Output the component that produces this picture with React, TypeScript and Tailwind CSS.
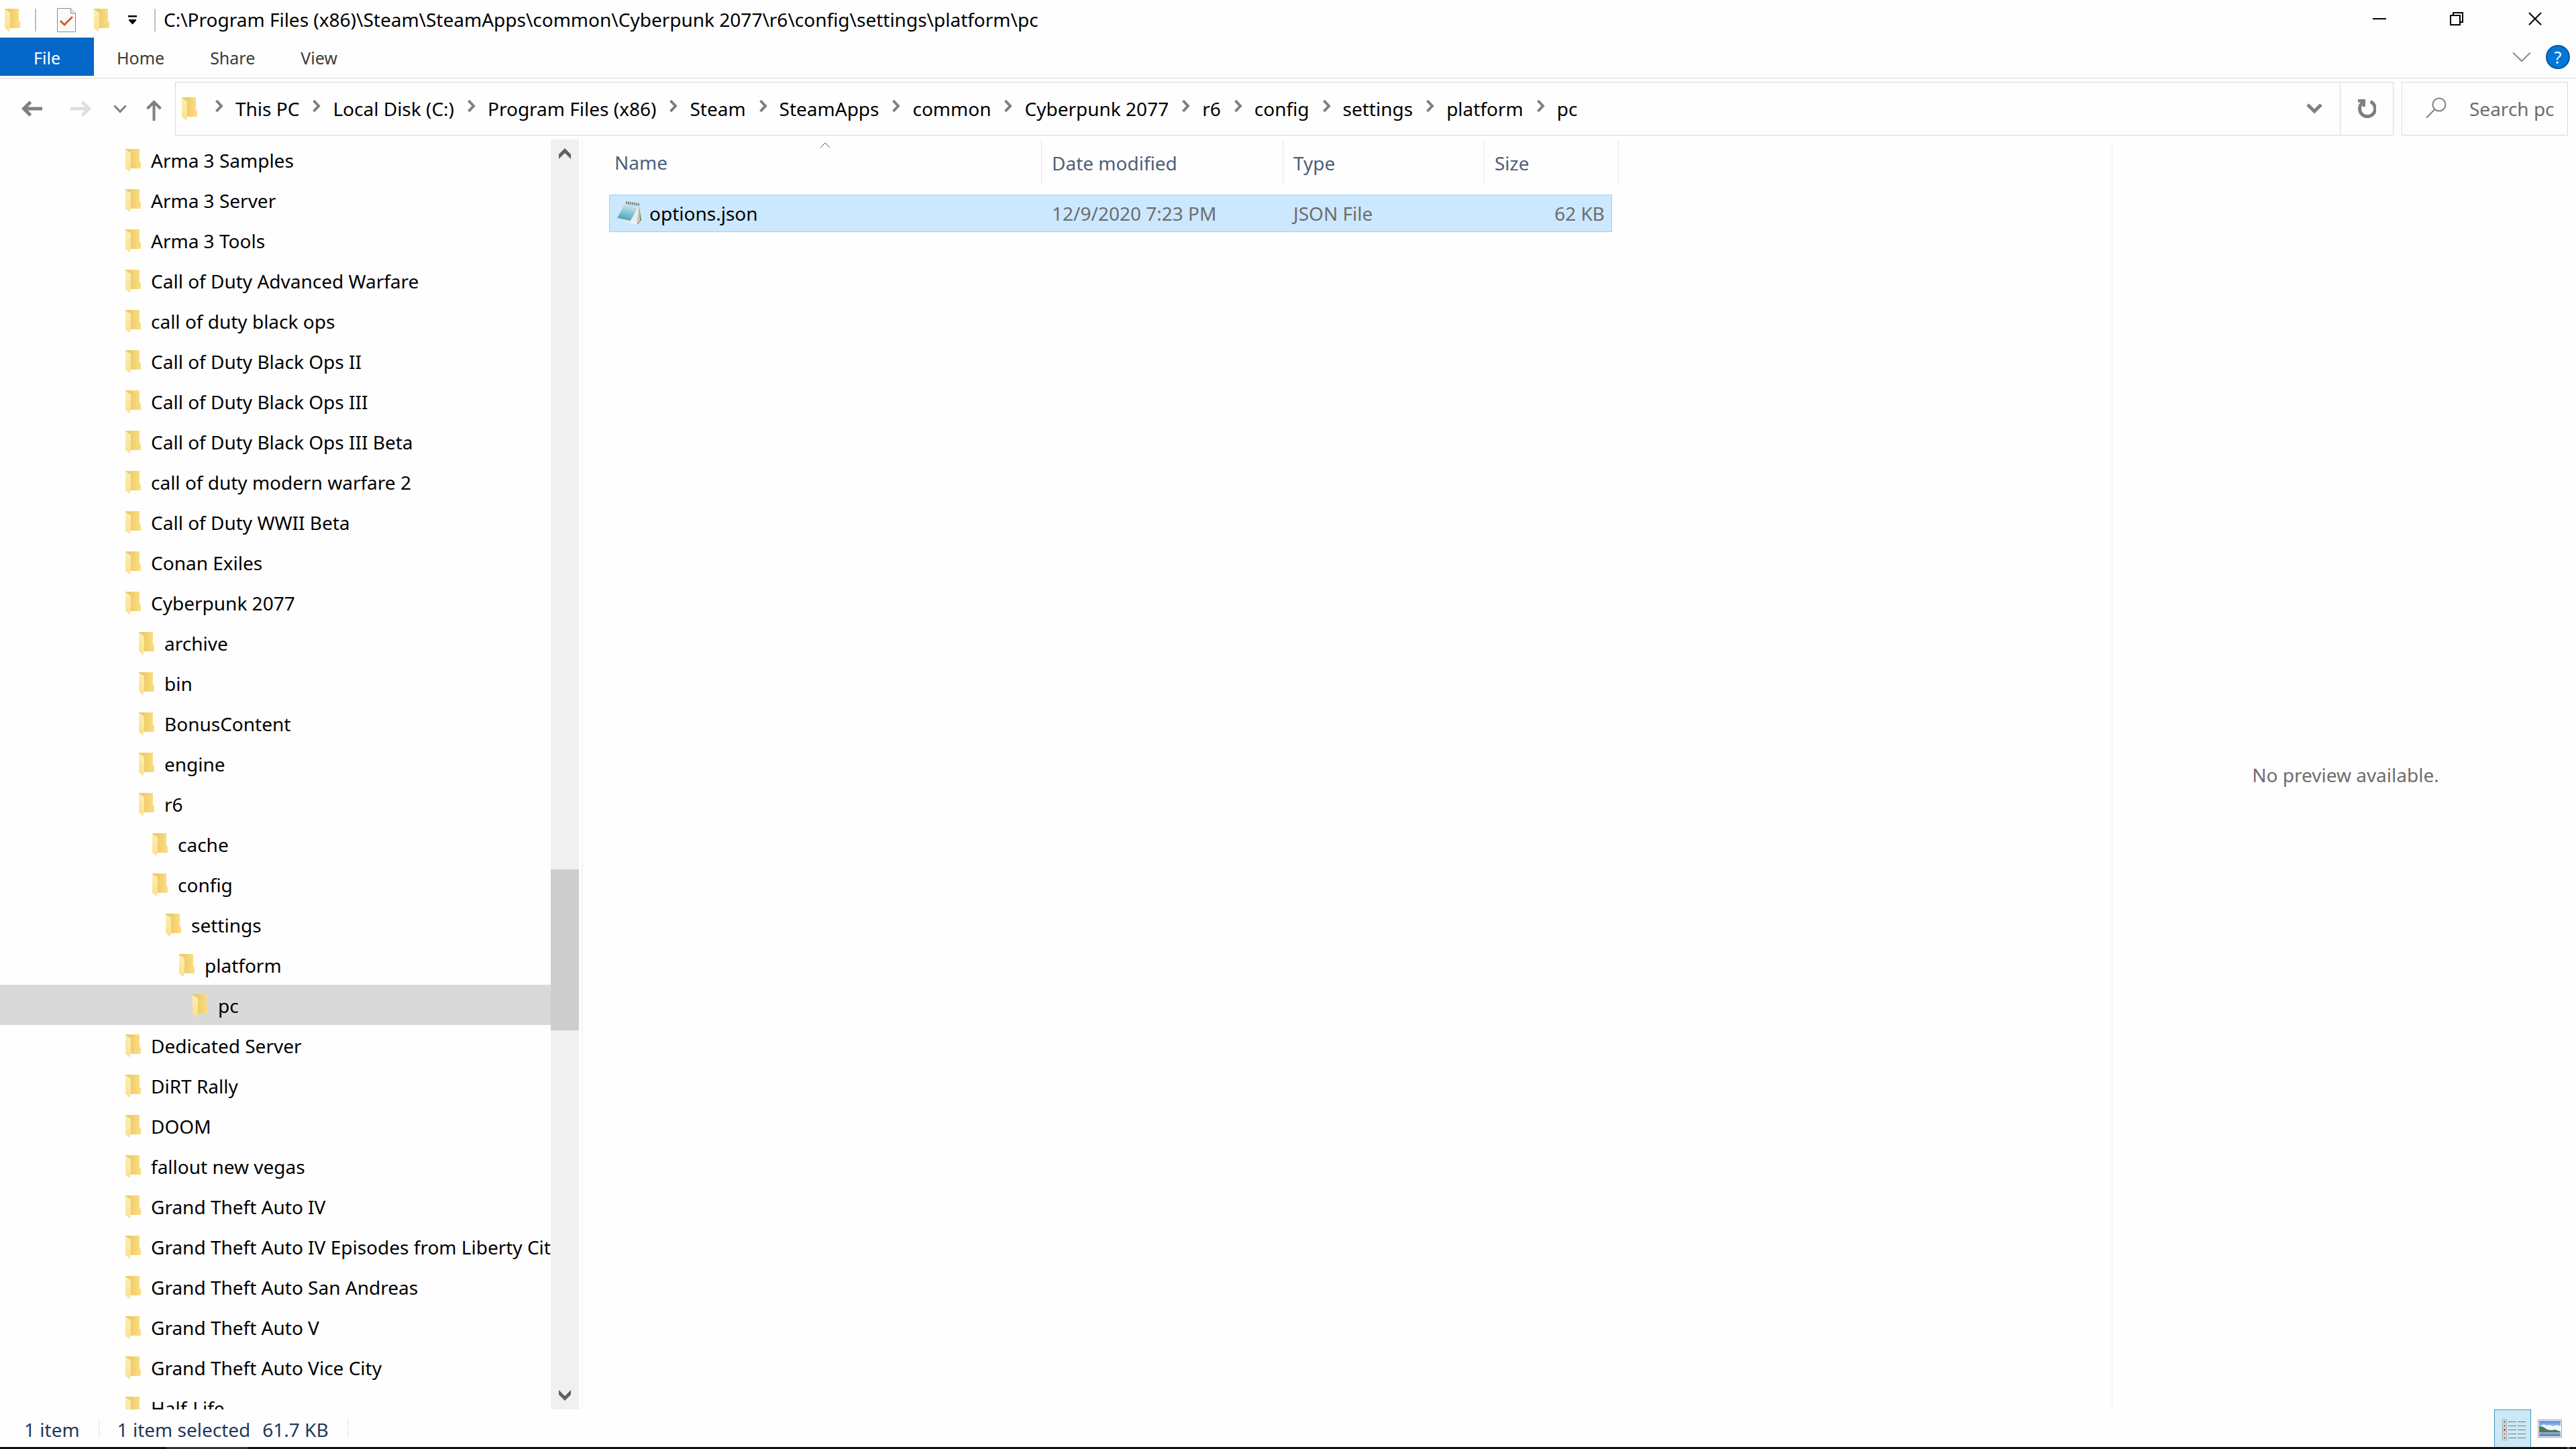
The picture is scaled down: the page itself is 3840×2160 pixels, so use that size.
import React, { useState } from 'react';

type TreeNode = { name: string; level: number };

const tree: TreeNode[] = [
  { name: 'Arma 3 Samples', level: 0 },
  { name: 'Arma 3 Server', level: 0 },
  { name: 'Arma 3 Tools', level: 0 },
  { name: 'Call of Duty Advanced Warfare', level: 0 },
  { name: 'call of duty black ops', level: 0 },
  { name: 'Call of Duty Black Ops II', level: 0 },
  { name: 'Call of Duty Black Ops III', level: 0 },
  { name: 'Call of Duty Black Ops III Beta', level: 0 },
  { name: 'call of duty modern warfare 2', level: 0 },
  { name: 'Call of Duty WWII Beta', level: 0 },
  { name: 'Conan Exiles', level: 0 },
  { name: 'Cyberpunk 2077', level: 0 },
  { name: 'archive', level: 1 },
  { name: 'bin', level: 1 },
  { name: 'BonusContent', level: 1 },
  { name: 'engine', level: 1 },
  { name: 'r6', level: 1 },
  { name: 'cache', level: 2 },
  { name: 'config', level: 2 },
  { name: 'settings', level: 3 },
  { name: 'platform', level: 4 },
  { name: 'pc', level: 5 },
  { name: 'Dedicated Server', level: 0 },
  { name: 'DiRT Rally', level: 0 },
  { name: 'DOOM', level: 0 },
  { name: 'fallout new vegas', level: 0 },
  { name: 'Grand Theft Auto IV', level: 0 },
  { name: 'Grand Theft Auto IV Episodes from Liberty City', level: 0 },
  { name: 'Grand Theft Auto San Andreas', level: 0 },
  { name: 'Grand Theft Auto V', level: 0 },
  { name: 'Grand Theft Auto Vice City', level: 0 },
  { name: 'Half-Life', level: 0 },
];

const indent = ['pl-[187px]', 'pl-[207px]', 'pl-[227px]', 'pl-[247px]', 'pl-[267px]', 'pl-[287px]'];

const crumbs = [
  'This PC',
  'Local Disk (C:)',
  'Program Files (x86)',
  'Steam',
  'SteamApps',
  'common',
  'Cyberpunk 2077',
  'r6',
  'config',
  'settings',
  'platform',
  'pc',
];

const FolderIcon: React.FC = () => (
  <svg viewBox="0 0 24 35" className="h-[35px] w-6 shrink-0" aria-hidden="true">
    <defs>
      <linearGradient id="folderBack" x1="0" y1="0" x2="1" y2="0">
        <stop offset="0.3" stopColor="#eecb68" />
        <stop offset="1" stopColor="#fcdf85" />
      </linearGradient>
      <linearGradient id="folderFlap" x1="0" y1="0" x2="0" y2="1">
        <stop offset="0" stopColor="#fdeeb5" />
        <stop offset="1" stopColor="#fbe08a" />
      </linearGradient>
    </defs>
    <path d="M0 0H21V18L23 20V29H6L0 4Z" fill="url(#folderBack)" />
    <path d="M0 1L8 6V28L7 29V34.500L0 29Z" fill="url(#folderFlap)" />
  </svg>
);

const CrumbChevron: React.FC = () => (
  <svg viewBox="0 0 13 20" className="mb-2 h-5 w-[13px] shrink-0" fill="none" stroke="#7f7f7f" strokeWidth="4" aria-hidden="true">
    <path d="M2.500 2L10 10L2.500 18" />
  </svg>
);

const NotepadIcon: React.FC = () => (
  <svg viewBox="0 0 38 36" className="h-9 w-[38px] shrink-0" aria-hidden="true">
    <defs>
      <linearGradient id="notepadCover" x1="0.600" y1="0" x2="0.300" y2="1">
        <stop offset="0" stopColor="#d4eef2" />
        <stop offset="0.450" stopColor="#8fcbd8" />
        <stop offset="1" stopColor="#3f9fb5" />
      </linearGradient>
    </defs>
    <path d="M33 3L37 28L31 35L29 14Z" fill="#8a7350" />
    <path d="M34 4L35 29L30 35L27 20Z" fill="#cfc9b8" />
    <path d="M33 5L30 35L16 30L24 24Z" fill="#f3f8fa" />
    <path d="M31 14L22 28M32 19L24 30M31 25L27 32" stroke="#c3d3da" strokeWidth="1" />
    <path d="M13 3L34 6L20 30L1 25Z" fill="url(#notepadCover)" />
    <path d="M1 25L20 29L30 35L19 33Z" fill="#e3eef1" />
    <path d="M14 2L34 5" stroke="#7d8486" strokeWidth="4" strokeDasharray="2 1" />
  </svg>
);

const DetailsIcon: React.FC = () => {
  const colors = ['#5c8fc4', '#6f8f5a', '#c0392b', '#9aa86a', '#5c8fc4'];
  return (
    <svg viewBox="0 0 36 31" className="h-[31px] w-9" shapeRendering="crispEdges" aria-hidden="true">
      {colors.map((color, i) => (
        <g key={i}>
          <rect x="0.500" y={i * 6 + 0.5} width="6" height="6" fill="#ffffff" stroke="#a0a0a0" />
          <rect x="2" y={i * 6 + 2} width="3" height="3" fill={color} />
          <path d={`M9 ${i * 6 + 3.5}h12M23 ${i * 6 + 3.5}h12`} stroke="#7a7a7a" />
        </g>
      ))}
    </svg>
  );
};

const ThumbnailIcon: React.FC = () => (
  <svg viewBox="0 0 36 27" className="h-[27px] w-9" aria-hidden="true">
    <defs>
      <linearGradient id="thumbSky" x1="0" y1="0" x2="0" y2="1">
        <stop offset="0" stopColor="#5c8fe6" />
        <stop offset="1" stopColor="#dcecfb" />
      </linearGradient>
      <linearGradient id="thumbWater" x1="0" y1="0" x2="0" y2="1">
        <stop offset="0" stopColor="#9bb9d6" />
        <stop offset="1" stopColor="#4f7ba6" />
      </linearGradient>
    </defs>
    <rect x="0.500" y="0.500" width="35" height="26" fill="#ffffff" stroke="#a3a3ab" />
    <rect x="2" y="2" width="32" height="17" fill="url(#thumbSky)" />
    <path d="M5 9q4-3 8 0q6-2 9 1q7-3 12 0v7H5z" fill="#f1f7fd" />
    <path d="M2 10L8 11L14 15L20 16L26 15L34 18V20H2Z" fill="#4d7a55" />
    <rect x="2" y="19" width="32" height="6" fill="url(#thumbWater)" />
  </svg>
);

const TitleBar: React.FC = () => (
  <header className="flex h-14 shrink-0 items-center pl-[7px] pt-1">
    <div className="flex items-center">
      <FolderIcon />
      <div className="ml-[21px] h-[34px] w-0.5 bg-[#bfbfbf]" />
      <button aria-label="Properties" className="ml-[31px]">
        <svg viewBox="0 0 28 36" className="h-9 w-7" fill="none" aria-hidden="true">
          <path d="M0.500 0.500H20.500L27.500 8V35.500H0.500Z" fill="#fafafa" stroke="#8c8c8c" />
          <path d="M20.500 0.500V8H27.500" fill="#e8e8e8" stroke="#8c8c8c" />
          <path d="M5 19L11 25L23 13" stroke="#e05a1e" strokeWidth="3" />
        </svg>
      </button>
      <button aria-label="New folder" className="ml-[27px]">
        <FolderIcon />
      </button>
      <button aria-label="Customize Quick Access Toolbar" className="ml-[27px]">
        <svg viewBox="0 0 14 14" className="h-3.5 w-3.5" aria-hidden="true">
          <path d="M0 0H13V2.500H0ZM1 6H12V7.500L6.500 13.500L1 7.500Z" fill="#000000" />
        </svg>
      </button>
      <div className="ml-[25px] h-[34px] w-0.5 bg-[#bfbfbf]" />
    </div>
    <h1 className="ml-3 pb-0.5 text-[28px] leading-9 text-black">
      C:\Program Files (x86)\Steam\SteamApps\common\Cyberpunk 2077\r6\config\settings\platform\pc
    </h1>
    <div className="ml-auto flex h-full items-center pb-1 pr-[51px]">
      <button aria-label="Minimize">
        <svg viewBox="0 0 20 20" className="h-5 w-5" shapeRendering="crispEdges" aria-hidden="true">
          <path d="M0 10H20" stroke="#000000" strokeWidth="2" />
        </svg>
      </button>
      <button aria-label="Restore" className="ml-[95px]">
        <svg viewBox="0 0 20 20" className="h-5 w-5" fill="none" stroke="#000000" strokeWidth="2" shapeRendering="crispEdges" aria-hidden="true">
          <path d="M1 5H15V19H1Z" />
          <path d="M5 5V1H19V15H15" />
        </svg>
      </button>
      <button aria-label="Close" className="ml-[97px]">
        <svg viewBox="0 0 20 20" className="h-5 w-5" stroke="#000000" strokeWidth="2" aria-hidden="true">
          <path d="M1 1L19 19M19 1L1 19" />
        </svg>
      </button>
    </div>
  </header>
);

const Ribbon: React.FC = () => (
  <div className="flex h-[61px] shrink-0 items-start border-b border-[#d9d9d9] text-[25px] leading-9 text-[#3b3b3b]">
    <button className="h-[57px] w-[140px] bg-[#0568c8] pt-0.5 text-white">File</button>
    <button className="ml-[34px] h-[57px] pt-0.5">Home</button>
    <button className="ml-[68px] h-[57px] pt-0.5">Share</button>
    <button className="ml-[68px] h-[57px] pt-0.5">View</button>
    <div className="ml-auto flex h-[57px] items-center gap-[22px] pr-[9px]">
      <button aria-label="Minimize the Ribbon">
        <svg viewBox="0 0 28 16" className="h-4 w-7" fill="none" stroke="#8a8a8a" strokeWidth="2" aria-hidden="true">
          <path d="M1 1.500L14 14L27 1.500" />
        </svg>
      </button>
      <button
        aria-label="Help"
        className="flex h-9 w-9 items-center justify-center rounded-full border-2 border-[#0a5a9e] bg-[#0078d7] text-white"
      >
        ?
      </button>
    </div>
  </div>
);

const AddressBar: React.FC = () => {
  const [query, setQuery] = useState('');
  return (
    <div className="flex shrink-0 items-center pb-1.5 pt-[5px]">
      <nav className="flex w-[261px] shrink-0 items-center pl-8" aria-label="History">
        <button aria-label="Back">
          <svg viewBox="0 0 31 24" className="h-6 w-[31px]" fill="none" stroke="#7f7f7f" strokeWidth="5" aria-hidden="true">
            <path d="M31 12H4M13.500 2L3.500 12L13.500 22" />
          </svg>
        </button>
        <button aria-label="Forward" className="ml-[42px]">
          <svg viewBox="0 0 31 24" className="h-6 w-[31px]" fill="none" stroke="#dedede" strokeWidth="5" aria-hidden="true">
            <path d="M0 12H27M17.500 2L27.500 12L17.500 22" />
          </svg>
        </button>
        <button aria-label="Recent locations" className="ml-[33px]">
          <svg viewBox="0 0 20 13" className="h-[13px] w-5" fill="none" stroke="#7f7f7f" strokeWidth="3" aria-hidden="true">
            <path d="M1.500 1.500L10 10.500L18.500 1.500" />
          </svg>
        </button>
        <button aria-label="Up" className="ml-[29px] mt-1">
          <svg viewBox="0 0 23 31" className="h-[31px] w-[23px]" fill="none" stroke="#7f7f7f" strokeWidth="4" aria-hidden="true">
            <path d="M11.500 31V3M1.500 13L11.500 3L21.500 13" />
          </svg>
        </button>
      </nav>
      <div className="flex h-20 min-w-0 flex-1 border border-[#d9d9d9]">
        <div className="flex min-w-0 flex-1 items-center pl-[9px] text-[28px] leading-9">
          <FolderIcon />
          <ol className="ml-[25px] flex items-center">
            {crumbs.map((crumb) => (
              <li key={crumb} className="mr-[19px] flex items-center">
                <CrumbChevron />
                <button className="ml-[18px] whitespace-nowrap text-black">{crumb}</button>
              </li>
            ))}
          </ol>
          <button aria-label="Previous locations" className="ml-auto mr-[26px]">
            <svg viewBox="0 0 24 16" className="h-4 w-6" fill="none" stroke="#7f7f7f" strokeWidth="5" aria-hidden="true">
              <path d="M2 2L12 12L22 2" />
            </svg>
          </button>
        </div>
        <button aria-label="Refresh" className="flex w-[79px] items-center justify-center border-l border-[#d9d9d9]">
          <svg viewBox="0 0 28 29" className="h-[29px] w-7" fill="none" aria-hidden="true">
            <path d="M19.500 3.500A11.500 11.500 0 1 1 8 5" stroke="#7f7f7f" strokeWidth="5" />
            <path d="M1 0H12V11H8V4.500H1Z" fill="#7f7f7f" />
          </svg>
        </button>
      </div>
      <label className="ml-3 mr-3 flex h-20 w-[248px] shrink-0 items-center border border-[#d9d9d9] pl-[35px]">
        <svg viewBox="0 0 31 31" className="mb-1 h-[31px] w-[31px] shrink-0" fill="none" stroke="#7f7f7f" strokeWidth="2" aria-hidden="true">
          <circle cx="20" cy="11" r="9.500" />
          <path d="M13.500 18L1 30.500" />
        </svg>
        <input
          type="text"
          aria-label="Search pc"
          placeholder="Search pc"
          value={query}
          onChange={(e) => setQuery(e.target.value)}
          className="ml-[34px] w-full min-w-0 bg-transparent text-[28px] leading-9 outline-none placeholder:text-[#6d6d6d]"
        />
      </label>
    </div>
  );
};

const FolderTree: React.FC = () => {
  const [selected, setSelected] = useState('pc');
  return (
    <aside className="flex w-[869px] shrink-0 border-r-2 border-[#f5f5f5]">
      <ul className="min-w-0 flex-1 overflow-hidden">
        {tree.map((node) => (
          <li key={node.name}>
            <button
              onClick={() => setSelected(node.name)}
              className={`flex h-[60px] w-full items-center pt-0.5 text-left text-[28px] leading-9 text-black ${indent[node.level]} ${
                selected === node.name ? 'bg-[#d9d9d9]' : ''
              }`}
            >
              <FolderIcon />
              <span className="ml-3.5 whitespace-nowrap">{node.name}</span>
            </button>
          </li>
        ))}
      </ul>
      {/* Scrollbar */}
      <div className="mr-1 flex w-[42px] shrink-0 flex-col bg-[#f0f0f0]">
        <button aria-label="Scroll up" className="flex h-[42px] items-center justify-center">
          <svg viewBox="0 0 18 16" className="h-4 w-[18px]" fill="#606060" aria-hidden="true">
            <path d="M9 0L18 9V16L9 7L0 16V9Z" />
          </svg>
        </button>
        <div className="grow-[2]" />
        <div className="h-60 bg-[#cdcdcd]" />
        <div className="grow" />
        <button aria-label="Scroll down" className="flex h-[42px] items-center justify-center">
          <svg viewBox="0 0 18 16" className="h-4 w-[18px]" fill="#606060" aria-hidden="true">
            <path d="M9 16L18 7V0L9 9L0 0V7Z" />
          </svg>
        </button>
      </div>
    </aside>
  );
};

const FileList: React.FC = () => (
  <section className="min-w-0 flex-1 pl-[39px]">
    <table className="w-[1505px] table-fixed border-separate border-spacing-0 text-left text-[28px] leading-9">
      <colgroup>
        <col className="w-[645px]" />
        <col className="w-[360px]" />
        <col className="w-[300px]" />
        <col className="w-[190px]" />
        <col className="w-2.5" />
      </colgroup>
      <thead>
        <tr className="h-[67px] text-[#4c607a]">
          <th className="border-r border-[#e5e5e5] p-0 align-top font-normal">
            <svg viewBox="0 0 16 9" className="mx-auto mt-1 h-[9px] w-4" fill="none" stroke="#5a5a5a" aria-hidden="true">
              <path d="M1 8L8 1L15 8" />
            </svg>
            <div className="pl-2 pt-[3px]">Name</div>
          </th>
          <th className="border-r border-[#e5e5e5] p-0 pl-[15px] pt-0.5 font-normal">Date modified</th>
          <th className="border-r border-[#e5e5e5] p-0 pl-[15px] pt-0.5 font-normal">Type</th>
          <th colSpan={2} className="border-r border-[#e5e5e5] p-0 pl-[15px] pt-0.5 font-normal">Size</th>
        </tr>
        <tr className="h-[15px]" aria-hidden="true">
          <td colSpan={5} className="p-0" />
        </tr>
      </thead>
      <tbody>
        <tr className="h-14 text-[#6d6d6d]">
          <td className="border-y border-l border-[#a3cfee] bg-[#cce8ff] p-0 pl-2.5">
            <div className="flex items-center text-black">
              <NotepadIcon />
              <span className="ml-[11px]">options.json</span>
            </div>
          </td>
          <td className="border-y border-[#a3cfee] bg-[#cce8ff] p-0 pl-[15px]">12/9/2020 7:23 PM</td>
          <td className="border-y border-[#a3cfee] bg-[#cce8ff] p-0 pl-[15px]">JSON File</td>
          <td className="border-y border-r border-[#a3cfee] bg-[#cce8ff] p-0 pr-2.5 text-right">62 KB</td>
          <td className="p-0" />
        </tr>
      </tbody>
    </table>
  </section>
);

const StatusBar: React.FC = () => (
  <footer className="shrink-0">
    <div className="flex h-14 items-center pl-9 pr-[21px] text-[28px] leading-9 text-[#1e395b]">
      <span className="pt-1">1 item</span>
      <div className="ml-7 h-7 w-0.5 bg-[#f0f0f0]" />
      <span className="ml-[26px] pt-1">1 item selected</span>
      <span className="ml-[18px] pt-1">61.7 KB</span>
      <div className="ml-7 h-7 w-0.5 bg-[#f0f0f0]" />
      <div className="ml-auto flex h-full items-center">
        <button
          aria-label="Details view"
          className="flex h-full w-[55px] items-center justify-center border border-b-0 border-[#3f99b8] bg-[#cbe8f6] pt-1 pl-1"
        >
          <DetailsIcon />
        </button>
        <button aria-label="Large thumbnails view" className="ml-2.5">
          <ThumbnailIcon />
        </button>
      </div>
    </div>
    {/* Top edge of the taskbar */}
    <div className="flex h-[3px] bg-[#101010]">
      <div className="ml-[248px] w-[121px] bg-[#333333]" />
      <div className="ml-auto mr-2.5 w-[3px] bg-[#606060]" />
    </div>
  </footer>
);

const App: React.FC = () => {
  return (
    <div className="flex h-screen flex-col overflow-hidden bg-[#fefefe] font-['Noto_Sans','Open_Sans',sans-serif]">
      <TitleBar />
      <Ribbon />
      <AddressBar />
      <main className="flex min-h-0 flex-1">
        <FolderTree />
        <FileList />
        <section className="flex w-[692px] shrink-0 items-center justify-center border-l border-[#f0f0f0] pl-1 text-[28px] leading-9 text-[#6d6d6d]">
          No preview available.
        </section>
      </main>
      <StatusBar />
    </div>
  );
};

export default App;
